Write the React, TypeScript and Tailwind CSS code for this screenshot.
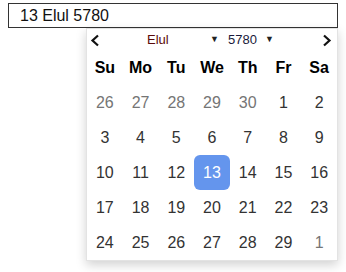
const weekdays = ["Su", "Mo", "Tu", "We", "Th", "Fr", "Sa"];

const weeks: { day: number; outside?: boolean }[][] = [
	[26, 27, 28, 29, 30].map((d) => ({ day: d, outside: true })).concat([{ day: 1 }, { day: 2 }]),
	[3, 4, 5, 6, 7, 8, 9].map((d) => ({ day: d })),
	[10, 11, 12, 13, 14, 15, 16].map((d) => ({ day: d })),
	[17, 18, 19, 20, 21, 22, 23].map((d) => ({ day: d })),
	[24, 25, 26, 27, 28, 29].map((d) => ({ day: d })).concat([{ day: 1, outside: true }]),
];

const selected = 13;

export default function App() {
	return (
		<div className="w-[346px] h-[272px] bg-white font-['Liberation_Sans',Arial,sans-serif] pt-[3px] pl-[8px]">
			{/* Input */}
			<div className="w-[330px] h-[25px] border border-[#333] flex items-center pl-[11px] text-[16px] text-[#111]">
				13 Elul 5780
			</div>

			{/* Popup */}
			<div className="ml-[78px] w-[252px] bg-white border border-[#e3e3e3] shadow-[0_4px_10px_rgba(0,0,0,0.18)]">
				{/* Header */}
				<div className="h-[22px] flex items-center pl-[3px] pr-[5px] text-[13px] text-[#222]">
					<svg width="10" height="13" viewBox="0 0 10 13" className="shrink-0">
						<path d="M8 1.5 L2.5 6.5 L8 11.5" fill="none" stroke="#111" strokeWidth="2.2" />
					</svg>
					<span className="ml-[47px] w-[72px] flex justify-between items-center">
						<span className="text-[#5a0a0a]">Elul</span>
						<span className="text-[9px]">▼</span>
					</span>
					<span className="ml-[9px] w-[46px] flex justify-between items-center">
						<span className="text-[#1a1a3a]">5780</span>
						<span className="text-[9px]">▼</span>
					</span>
					<svg width="10" height="13" viewBox="0 0 10 13" className="shrink-0 ml-auto">
						<path d="M2 1.5 L7.5 6.5 L2 11.5" fill="none" stroke="#111" strokeWidth="2.2" />
					</svg>
				</div>

				{/* Weekdays */}
				<div className="grid grid-cols-7 h-[34px] items-center text-center text-[16px] font-bold text-black">
					{weekdays.map((w) => (
						<div key={w}>{w}</div>
					))}
				</div>

				{/* Days */}
				<div>
					{weeks.map((week, i) => (
						<div key={i} className="grid grid-cols-7 h-[35px] text-[16px] text-center">
							{week.map((d, j) => {
								const isSel = !d.outside && d.day === selected;
								return (
									<div
										key={j}
										className={`flex items-center justify-center rounded-[6px] ${
											isSel ? "bg-[#6495ed] text-white" : d.outside ? "text-[#757575]" : "text-[#333]"
										}`}
									>
										{d.day}
									</div>
								);
							})}
						</div>
					))}
				</div>
			</div>
		</div>
	);
}
